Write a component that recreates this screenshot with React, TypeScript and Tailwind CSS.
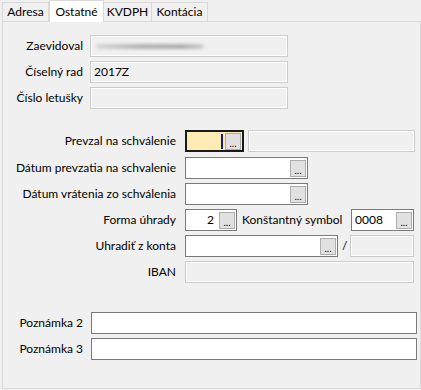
import React from "react";

const font = { fontFamily: "Lato, 'Noto Sans', sans-serif" };

function Dots() {
  return (
    <div className="flex h-[17px] w-[16px] shrink-0 items-end justify-center border border-[#adadad] bg-[#e1e1e1] pb-[1px] text-[10px] leading-[10px] text-black">
      ...
    </div>
  );
}

function Disabled({ w, children }: { w: string; children?: React.ReactNode }) {
  return (
    <div className={`${w} flex h-[22px] shrink-0 items-center border border-[#cccccc] bg-[#f0f0f0] pl-[3px] shadow-[inset_1px_1px_0_#ffffff,inset_-1px_-1px_0_#ffffff]`}>
      {children}
    </div>
  );
}

function Field({ w, children, btn = true, right = false }: { w: string; children?: React.ReactNode; btn?: boolean; right?: boolean }) {
  return (
    <div className={`${w} flex h-[22px] shrink-0 items-center border border-[#7a7a7a] bg-white pl-[3px] pr-[1px]`}>
      <div className={`flex-1 ${right ? "text-right pr-[5px]" : ""}`}>{children}</div>
      {btn && <Dots />}
    </div>
  );
}

export default function App() {
  return (
    <div className="relative h-[390px] w-[421px] bg-[#f0f0f0] text-[12px] text-black" style={font}>
      {/* tabs */}
      <div className="flex h-[21px] items-end pl-[2px]">
        <div className="flex h-[19px] w-[47px] items-center justify-center border border-b-0 border-[#d9d9d9] bg-[#f0f0f0]">Adresa</div>
        <div className="relative z-10 -mb-px flex h-[22px] w-[55px] items-start justify-center border border-b-0 border-[#d9d9d9] bg-white pt-[2px]">Ostatné</div>
        <div className="flex h-[19px] w-[48px] items-center justify-center border border-b-0 border-l-0 border-[#d9d9d9] bg-[#f0f0f0]">KVDPH</div>
        <div className="flex h-[19px] w-[56px] items-center justify-center border border-b-0 border-l-0 border-[#d9d9d9] bg-[#f0f0f0]">Kontácia</div>
      </div>
      {/* panel */}
      <div className="ml-[2px] h-[368px] w-[419px] border border-[#d9d9d9] bg-[#f0f0f0] pt-[13px]">
        {/* section 1 */}
        <div className="flex h-[22px] items-center">
          <div className="w-[80px] text-right">Zaevidoval</div>
          <div className="ml-[7px]">
            <Disabled w="w-[198px]">
              <div className="ml-[2px] h-[5px] w-[108px] rounded-full bg-[linear-gradient(90deg,#d8d8d8,#b4b4b4_40%,#b0b0b0_80%,#d0d0d0)] blur-[1.5px]" />
            </Disabled>
          </div>
        </div>
        <div className="mt-[4px] flex h-[22px] items-center">
          <div className="w-[80px] text-right">Číselný rad</div>
          <div className="ml-[7px]">
            <Disabled w="w-[198px]">2017Z</Disabled>
          </div>
        </div>
        <div className="mt-[4px] flex h-[22px] items-center">
          <div className="w-[80px] text-right">Číslo letušky</div>
          <div className="ml-[7px]">
            <Disabled w="w-[198px]" />
          </div>
        </div>

        {/* section 2 */}
        <div className="mt-[21px] flex h-[22px] items-center">
          <div className="w-[173px] text-right">Prevzal na schválenie</div>
          <div className="ml-[9px] flex h-[22px] w-[59px] items-center border-2 border-[#1a1a1a] bg-[#ffecb5] pr-[1px]">
            <div className="flex flex-1 justify-end pr-[2px]">
              <div className="h-[15px] w-[2px] bg-[#1a1a6e]" />
            </div>
            <Dots />
          </div>
          <div className="ml-[4px]">
            <Disabled w="w-[167px]" />
          </div>
        </div>
        <div className="mt-[5px] flex h-[22px] items-center">
          <div className="w-[173px] text-right">Dátum prevzatia na schvalenie</div>
          <div className="ml-[9px]">
            <Field w="w-[123px]" />
          </div>
        </div>
        <div className="mt-[4px] flex h-[22px] items-center">
          <div className="w-[173px] text-right">Dátum vrátenia zo schválenia</div>
          <div className="ml-[9px]">
            <Field w="w-[123px]" />
          </div>
        </div>
        <div className="mt-[4px] flex h-[22px] items-center">
          <div className="w-[173px] text-right">Forma úhrady</div>
          <div className="ml-[9px]">
            <Field w="w-[52px]" right>
              2
            </Field>
          </div>
          <div className="ml-[5px] w-[103px]">Konštantný symbol</div>
          <div className="ml-[6px]">
            <Field w="w-[63px]">0008</Field>
          </div>
        </div>
        <div className="mt-[4px] flex h-[22px] items-center">
          <div className="w-[173px] text-right">Uhradiť z konta</div>
          <div className="ml-[9px]">
            <Field w="w-[153px]" />
          </div>
          <div className="ml-[4px] w-[8px]">/</div>
          <div className="ml-[0px]">
            <Disabled w="w-[64px]" />
          </div>
        </div>
        <div className="mt-[4px] flex h-[22px] items-center">
          <div className="w-[173px] text-right">IBAN</div>
          <div className="ml-[9px]">
            <Disabled w="w-[229px]" />
          </div>
        </div>

        {/* section 3 */}
        <div className="mt-[29px] flex h-[22px] items-center">
          <div className="w-[80px] text-right">Poznámka 2</div>
          <div className="ml-[8px]">
            <Field w="w-[326px]" btn={false} />
          </div>
        </div>
        <div className="mt-[4px] flex h-[22px] items-center">
          <div className="w-[80px] text-right">Poznámka 3</div>
          <div className="ml-[8px]">
            <Field w="w-[326px]" btn={false} />
          </div>
        </div>
      </div>
    </div>
  );
}
